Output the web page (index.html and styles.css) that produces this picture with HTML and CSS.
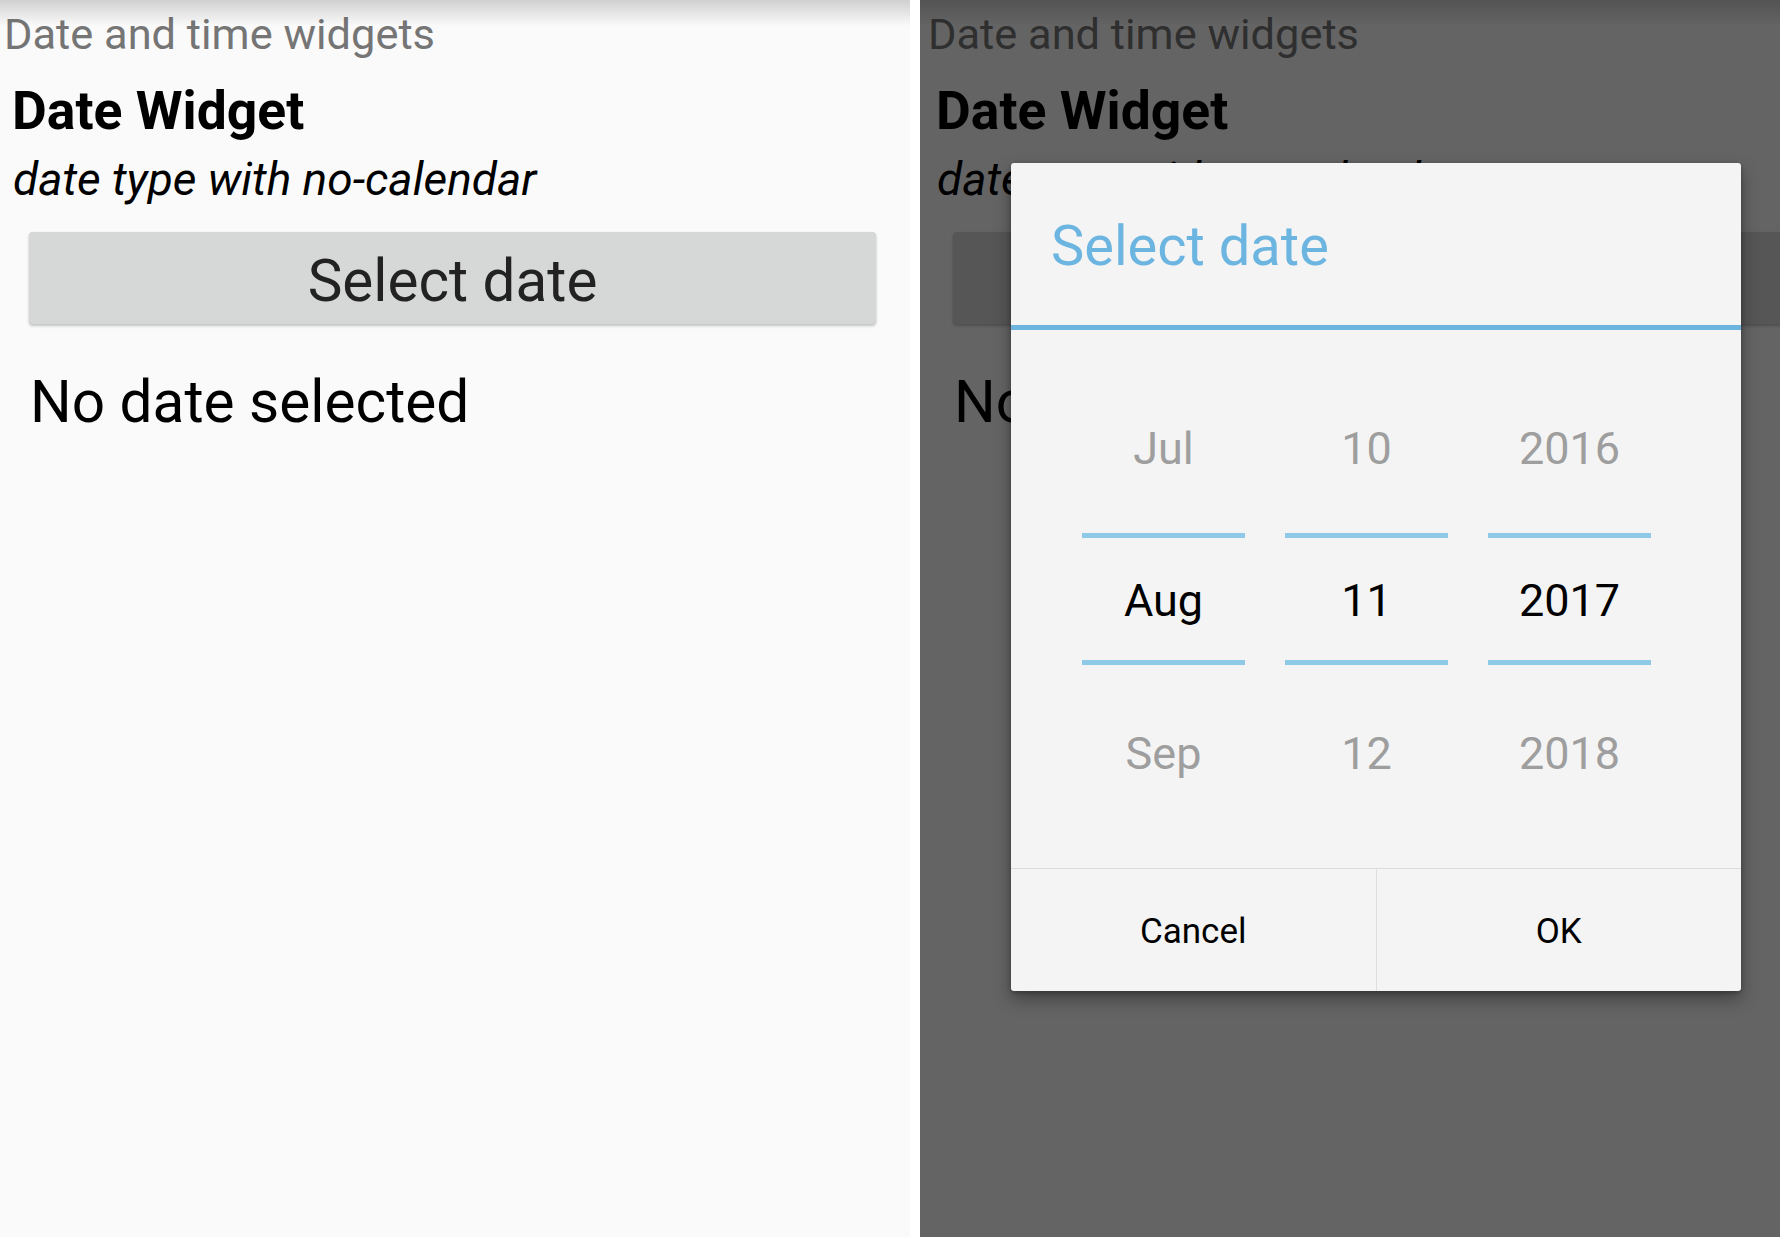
FILE: index.html
```html
<!DOCTYPE html>
<html lang="en">
<head>
<meta charset="utf-8">
<title>Date and time widgets</title>
<link rel="stylesheet" href="styles.css">
</head>
<body>
<div class="stage">
  <section class="screen">
    <div class="content">
      <div class="app-title">Date and time widgets</div>
      <div class="widget-label">Date Widget</div>
      <div class="widget-hint">date type with no-calendar</div>
      <div class="select-btn">Select date</div>
      <div class="answer">No date selected</div>
    </div>
  </section>
  <section class="screen screen-dimmed">
    <div class="content content-shift">
      <div class="app-title">Date and time widgets</div>
      <div class="widget-label">Date Widget</div>
      <div class="widget-hint">date type with no-calendar</div>
      <div class="select-btn">Select date</div>
      <div class="answer">No date selected</div>
    </div>
    <div class="scrim"></div>
    <div class="dialog">
      <div class="dialog-title">Select date</div>
      <div class="dialog-rule"></div>
      <div class="picker">
        <div class="picker-col">
          <div class="cell cell-top">Jul</div>
          <div class="cell-line"></div>
          <div class="cell cell-mid">Aug</div>
          <div class="cell-line"></div>
          <div class="cell cell-bottom">Sep</div>
        </div>
        <div class="picker-col">
          <div class="cell cell-top">10</div>
          <div class="cell-line"></div>
          <div class="cell cell-mid">11</div>
          <div class="cell-line"></div>
          <div class="cell cell-bottom">12</div>
        </div>
        <div class="picker-col">
          <div class="cell cell-top">2016</div>
          <div class="cell-line"></div>
          <div class="cell cell-mid">2017</div>
          <div class="cell-line"></div>
          <div class="cell cell-bottom">2018</div>
        </div>
      </div>
      <div class="dialog-actions">
        <div class="action">Cancel</div>
        <div class="action">OK</div>
      </div>
    </div>
  </section>
</div>
</body>
</html>
```
FILE: styles.css
```css
html, body {
  margin: 0;
  padding: 0;
  background: #ffffff;
}
body {
  font-family: Roboto, "Noto Sans", "Liberation Sans", sans-serif;
}
.stage {
  display: flex;
  gap: 10px;
  width: 1780px;
  height: 1237px;
  overflow: hidden;
}
.screen {
  position: relative;
  flex: 0 0 910px;
  height: 1237px;
  background: #fafafa;
  overflow: hidden;
}
.screen-dimmed {
  flex: 0 0 860px;
}
.screen::before {
  content: "";
  position: absolute;
  left: 0;
  right: 0;
  top: 0;
  height: 26px;
  background: linear-gradient(to bottom, rgba(0,0,0,0.17), rgba(0,0,0,0));
}
.content {
  display: flex;
  flex-direction: column;
  align-items: flex-start;
}
.content-shift {
  padding-left: 4px;
}
.app-title {
  margin-left: 4px;
  padding-top: 9px;
  font-size: 43.4px;
  line-height: 52px;
  color: #757575;
  white-space: nowrap;
}
.widget-label {
  margin-left: 12px;
  margin-top: 20px;
  font-size: 53.5px;
  line-height: 60px;
  font-weight: 700;
  color: #000;
  white-space: nowrap;
}
.widget-hint {
  margin-left: 13px;
  margin-top: 12px;
  font-size: 46px;
  line-height: 52px;
  font-style: italic;
  color: #000;
  white-space: nowrap;
}
.select-btn {
  flex: 0 0 auto;
  box-sizing: border-box;
  margin-left: 29px;
  margin-top: 27px;
  width: 847px;
  height: 92px;
  padding-top: 6px;
  border-radius: 4px;
  background: #d6d7d7;
  box-shadow: 0 2px 3px rgba(0,0,0,0.22), 0 0 1px rgba(0,0,0,0.12);
  text-align: center;
  font-size: 58.4px;
  line-height: 86px;
  color: #222;
  white-space: nowrap;
}
.answer {
  margin-left: 30px;
  margin-top: 43px;
  font-size: 58.5px;
  line-height: 70px;
  color: #000;
  white-space: nowrap;
}
.scrim {
  position: absolute;
  inset: 0;
  background: rgba(0,0,0,0.6);
}
.dialog {
  position: absolute;
  left: 91px;
  top: 163px;
  width: 730px;
  height: 828px;
  display: flex;
  flex-direction: column;
  background: #f4f4f4;
  border-radius: 3px;
  box-shadow: 0 8px 18px rgba(0,0,0,0.35), 0 2px 4px rgba(0,0,0,0.25);
  overflow: hidden;
}
.dialog-title {
  box-sizing: border-box;
  height: 162px;
  padding-top: 48px;
  padding-left: 40px;
  font-size: 56px;
  line-height: 70px;
  color: #6cb5e0;
}
.dialog-rule {
  height: 5px;
  background: #6db4df;
}
.picker {
  box-sizing: border-box;
  height: 538px;
  padding-top: 35px;
  padding-left: 71px;
  display: flex;
  gap: 40px;
}
.picker-col {
  width: 163px;
  display: flex;
  flex-direction: column;
}
.cell {
  box-sizing: border-box;
  text-align: center;
  font-size: 45px;
  color: #9e9e9e;
}
.cell-top {
  height: 168px;
  line-height: 168px;
}
.cell-bottom {
  height: 173px;
  padding-top: 5px;
  line-height: 168px;
}
.cell-mid {
  height: 122px;
  line-height: 122px;
  padding-top: 2px;
  color: #000;
}
.cell-line {
  height: 5px;
  background: #8ecae7;
}
.dialog-actions {
  flex: 1;
  display: flex;
  border-top: 1px solid #dcdcdc;
}
.action {
  flex: 1;
  box-sizing: border-box;
  padding-top: 4px;
  text-align: center;
  font-size: 35px;
  line-height: 118px;
  color: #000;
}
.action + .action {
  border-left: 1px solid #dedede;
}
```
